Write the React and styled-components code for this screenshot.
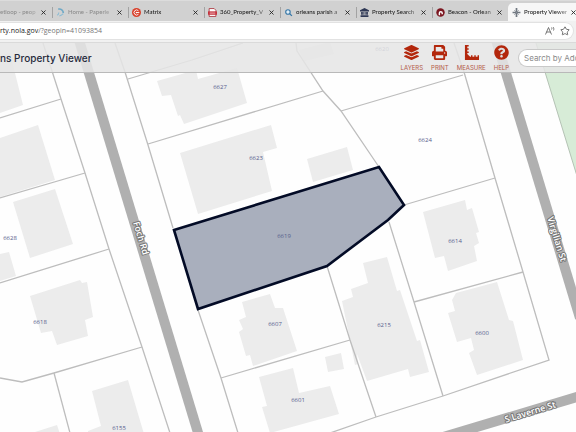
import React from 'react';
import styled, { createGlobalStyle, css } from 'styled-components';
import { FaLayerGroup, FaPrint, FaQuestionCircle } from 'react-icons/fa';
import { X, Star } from 'lucide-react';

const GlobalStyle = createGlobalStyle`
  *, *::before, *::after {
    box-sizing: border-box;
  }

  body {
    margin: 0;
    font-family: 'Open Sans', 'Noto Sans', sans-serif;
    background: #fefefe;
    overflow: hidden;
  }

  button, input {
    font-family: inherit;
    margin: 0;
  }
`;

const Browser = styled.div`
  display: flex;
  flex-direction: column;
  height: 100vh;
  overflow: hidden;
`;

const TabStrip = styled.div`
  display: flex;
  flex: none;
  height: 21px;
  padding-top: 2px;
  background: #d1d1d1;
  border-top: 1px solid #dcdcdc;
  overflow: hidden;
`;

const Tab = styled.div`
  display: flex;
  flex: none;
  align-items: center;
  gap: 3px;
  width: 76px;
  padding: 0 5px 0 4px;
  color: ${({ $faded }) => ($faded ? '#8c8c8c' : '#222')};

  /* divider sits on the left edge of every tab that has an icon */
  &::before {
    content: '';
    width: 1px;
    height: 11px;
    margin-left: -4px;
    background: #a3a3a3;
  }

  ${({ $cut }) =>
    $cut &&
    css`
      width: 52px;
      padding-left: 0;

      &::before {
        display: none;
      }
    `}

  ${({ $active }) =>
    $active &&
    css`
      width: 74px;
      background: #f7f7f7;
      border-radius: 5px 5px 0 0;

      &::before {
        background: transparent;
      }
    `}
`;

const TabLabel = styled.button`
  flex: 1;
  min-width: 0;
  padding: 0;
  border: 0;
  background: none;
  color: inherit;
  font-family: Lato, 'Open Sans', sans-serif;
  font-size: 6px;
  font-weight: 500;
  line-height: 12px;
  text-align: left;
  white-space: nowrap;
  mask-image: linear-gradient(to right, #000 75%, rgba(0, 0, 0, 0.4));
`;

const CloseButton = styled.button`
  display: flex;
  flex: none;
  padding: 0;
  border: 0;
  background: none;
  color: #222;
`;

const TabIcon = styled.svg`
  flex: none;
  width: 9px;
  height: 9px;
`;

const Toolbar = styled.div`
  display: flex;
  flex: none;
  height: 22px;
  padding: 1px 2px 2px 0;
  background: #f1f1f1;
  border-bottom: 1px solid #dadada;
`;

const AddressBar = styled.div`
  display: flex;
  flex: 1;
  align-items: center;
  gap: 5px;
  padding-right: 3px;
  background: #fff;
  border: 1px solid #e2e2e2;
  border-left: 0;
  border-radius: 0 9px 9px 0;
`;

const Url = styled.a`
  flex: 1;
  color: #767676;
  font-size: 7px;
  line-height: 12px;
  text-decoration: none;

  strong {
    color: #222;
    font-weight: 500;
  }
`;

const BarButton = styled.button`
  display: flex;
  align-items: center;
  padding: 0;
  border: 0;
  background: none;
  color: #555;
`;

const Viewer = styled.main`
  position: relative;
  flex: 1;
  min-height: 0;
`;

const Map = styled.svg`
  display: block;
  width: 100%;
  height: 100%;
`;

// translucent bar floating over the map
const Header = styled.header`
  position: absolute;
  top: 0;
  left: 0;
  right: 0;
  display: flex;
  align-items: center;
  height: 30px;
  background: rgba(229, 229, 229, 0.86);
  border-bottom: 1px solid #b9b9b9;
`;

const Title = styled.h1`
  flex: 1;
  margin: 0;
  color: #262b3c;
  font-family: Inter, 'Open Sans', sans-serif;
  font-size: 10px;
  font-weight: 500;
  line-height: 14px;
  white-space: nowrap;
`;

const Tools = styled.nav`
  display: flex;
  gap: 8px;
  margin-right: 9px;
`;

const ToolButton = styled.button`
  display: flex;
  flex-direction: column;
  align-items: center;
  gap: 4px;
  padding: 0;
  border: 0;
  background: none;
  color: #b3270c;
  font-size: 15px;

  span {
    color: #b35a48;
    font-family: Inter, 'Open Sans', sans-serif;
    font-size: 6px;
    line-height: 7px;
  }
`;

const SearchBox = styled.label`
  flex: none;
  width: 58px;
`;

const SearchInput = styled.input`
  display: block;
  width: 100%;
  height: 18px;
  padding: 0 0 0 5px;
  background: #fff;
  border: 1px solid #c9c9c9;
  border-right: 0;
  border-radius: 9px 0 0 9px;
  font-family: Inter, 'Open Sans', sans-serif;
  font-size: 8px;
  outline: none;

  &::placeholder {
    color: #8b8b8b;
    opacity: 1;
  }
`;

const Building = styled.polygon`
  fill: #ececec;
`;

const LotLine = styled.polyline`
  fill: none;
  stroke: #bdbdbd;
  stroke-width: 1.3;
`;

const Street = styled.line`
  stroke: #b0b0b0;
  stroke-width: 10;
`;

const Park = styled.polygon`
  fill: #d7ecd7;
  stroke: #b4c2b4;
`;

const SelectedParcel = styled.polygon`
  fill: #a9afbd;
  stroke: #030b26;
  stroke-width: 2.6;
`;

const LotNumber = styled.text`
  fill: #56608c;
  font-size: 6px;
  text-anchor: middle;
`;

const StreetName = styled.text`
  fill: #fff;
  stroke: #777;
  stroke-width: 2;
  stroke-linejoin: round;
  paint-order: stroke;
  font-size: 9px;
  font-weight: 600;
  text-anchor: middle;
`;

const buildings = [
  '0,56 10,53 16,77 22,75 16,77 23,105 0,113',
  '0,138 38,125 55,180 0,197',
  '13,202 55,189 73,244 30,258',
  '0,254 9,252 16,276 0,281',
  '30,296 80,280 82,283 87,282 93,317 85,320 88,336 57,345 52,331 41,333',
  '92,391 128,380 144,434 88,434 88,431 101,426',
  '35,432 57,425 60,434 35,434',
  '157,81 196,70 198,79 237,68 247,103 184,124 180,115 178,116 171,95 162,96',
  '180,153 271,125 277,148 263,152 272,191 198,214',
  '307,159 347,147 353,170 313,182',
  '299,50 330,42 334,54 304,61',
  '423,212 465,200 467,210 472,208 479,232 476,233 479,243 474,246 477,261 448,271 444,256 435,258',
  '452,300 456,293 497,282 509,320 513,321 523,360 477,375 469,353 474,350 471,338 457,342 448,313 455,311',
  '363,263 387,257 397,291 400,290 417,341 420,340 429,372 410,377 408,369 367,381 357,354 358,364 355,365 342,301 353,297 351,289 368,283',
  '242,302 270,294 275,308 283,308 297,351 253,366 250,355 246,356 239,332 243,329 239,320 246,317',
  '259,377 293,368 299,393 330,386 339,414 270,433 262,407 267,406',
  '325,357 341,353 344,369 328,372',
];

const lotLines = [
  '43,43 61,99 85,173 109,249 142,347 170,433',
  '0,118 61,99',
  '0,198 85,173',
  '0,283 109,249',
  '0,378 22,382 54,373 142,347',
  '54,373 70,433',
  '115,43 125,72 148,145 173,228',
  '128,79 192,60 243,43',
  '148,144 323,91',
  '296,43 297,51 323,91 341,111 379,167',
  '341,111 463,75',
  '454,43 464,72 495,178 523,272 549,360 443,396 376,417 330,433',
  '404,205 495,178',
  '389,222 414,302 443,396',
  '414,302 523,272',
  '327,266 350,340 376,417',
  '350,340 221,378',
  '198,310 221,378 238,433',
];

const lotNumbers = [
  ['6627', 220, 89],
  ['6623', 256, 160],
  ['6624', 425, 142],
  ['6619', 284, 238],
  ['6628', 10, 240],
  ['6618', 40, 324],
  ['6155', 119, 430],
  ['6607', 275, 326],
  ['6601', 298, 402],
  ['6215', 384, 327],
  ['6614', 455, 243],
  ['6600', 482, 335],
  ['6620', 382, 51],
];

const streetNames = [
  ['Foch Rd', 138, 239, 73],
  ['Virgilian St', 554, 240, 73],
  ['S Laverne St', 531, 415, -17],
];

const PaperlessIcon = () => (
  <TabIcon viewBox="0 0 16 16">
    <path d="M4 2c5-1 9 2 9 7" fill="none" stroke="#6fa9c6" strokeWidth="3" />
    <path d="M2 13c2-1 3-3 3-5M6 14c3 0 5-2 7-4" fill="none" stroke="#8dbdd4" strokeWidth="2" />
  </TabIcon>
);

const MatrixIcon = () => (
  <TabIcon viewBox="0 0 16 16">
    <circle cx="8" cy="8" r="8" fill="#d8402b" />
    <path d="M11.500 5a4.500 4.500 0 1 0 0 6M8 8h5" fill="none" stroke="#fff" strokeWidth="1.600" />
    <circle cx="8" cy="8" r="1.500" fill="#fff" />
  </TabIcon>
);

const PdfIcon = () => (
  <TabIcon viewBox="0 0 16 16">
    <path d="M2 1h9l3 3v11H2z" fill="#fff" stroke="#a8313a" strokeWidth="1.500" />
    <path d="M0 6h16v6H0z" fill="#c4303b" />
    <path d="M3 9h10" stroke="#f3c9cc" strokeWidth="1.500" />
  </TabIcon>
);

const SearchIcon = () => (
  <TabIcon viewBox="0 0 16 16">
    <circle cx="7" cy="7" r="4" fill="#e2eef6" stroke="#3878a8" strokeWidth="2" />
    <path d="M10 10l4 4" stroke="#3878a8" strokeWidth="2.500" />
  </TabIcon>
);

const BankIcon = () => (
  <TabIcon viewBox="0 0 16 16">
    <path d="M8 0l8 4v2H0V4zM1 13h14v3H1zM2 7h3v5H2zM6 7h1.500v5H6zM8.500 7H10v5H8.500zM11 7h3v5h-3z" fill="#2f3855" />
  </TabIcon>
);

const BeaconIcon = () => (
  <TabIcon viewBox="0 0 16 16">
    <circle cx="8" cy="8" r="7.500" fill="#7c1721" />
    <path d="M6 13V9c0-3 5-3 5 0v2" fill="none" stroke="#fff" strokeWidth="2.500" />
  </TabIcon>
);

const FleurIcon = () => (
  <TabIcon viewBox="0 0 16 16">
    <path d="M8 0v16M1 8h14" fill="none" stroke="#707780" strokeWidth="3" />
    <path d="M4 4l8 8M12 4l-8 8" fill="none" stroke="#8b9199" strokeWidth="1.500" />
  </TabIcon>
);

// L-shaped ruler with teeth along both arms
const MeasureIcon = () => (
  <svg width="15" height="15" viewBox="0 0 16 16" fill="currentColor">
    <path d="M1 0h4v1.500H3.500v2H5V5H3.500v2H5v1.500H3.500v1L6.500 12.500h1V11H9v1.500h2V11h1.500v1.500h2V11H16v5H1z" />
  </svg>
);

const ReadAloudIcon = () => (
  <svg width="10" height="10" viewBox="0 0 20 20" fill="none" stroke="currentColor" strokeWidth="1.600">
    <path d="M1 17L7 3l6 14M3 12h8M13 3c1 1 1 3 0 4M16 2c2 2 2 5 1 7" />
  </svg>
);

const tabs = [
  { label: 'etloop - peop', faded: true, cut: true },
  { label: 'Home - Paperle', icon: PaperlessIcon, faded: true },
  { label: 'Matrix', icon: MatrixIcon },
  { label: '360_Property_V', icon: PdfIcon },
  { label: 'orleans parish a', icon: SearchIcon },
  { label: 'Property Search', icon: BankIcon },
  { label: 'Beacon - Orlean', icon: BeaconIcon },
  { label: 'Property Viewer', icon: FleurIcon, active: true },
];

const tools = [
  { label: 'LAYERS', icon: FaLayerGroup },
  { label: 'PRINT', icon: FaPrint },
  { label: 'MEASURE', icon: MeasureIcon },
  { label: 'HELP', icon: FaQuestionCircle },
];

const ParcelMap = () => (
  <Map viewBox="0 43 576 389" preserveAspectRatio="xMinYMin slice">
    <Park points="535,40 545,72 577,176 580,176 580,40" />
    {buildings.map((points) => (
      <Building key={points} points={points} />
    ))}
    {lotLines.map((points) => (
      <LotLine key={points} points={points} />
    ))}
    <Street x1="79" y1="40" x2="199" y2="436" />
    <Street x1="496" y1="40" x2="580" y2="318" />
    <Street x1="440" y1="438" x2="580" y2="396" />
    <SelectedParcel points="174,230 379,167 404,205 388,220 327,266 198,309" />
    {lotNumbers.map(([number, x, y]) => (
      <LotNumber key={number} x={x} y={y}>
        {number}
      </LotNumber>
    ))}
    {streetNames.map(([name, x, y, angle]) => (
      <StreetName key={name} transform={`translate(${x} ${y}) rotate(${angle})`}>
        {name}
      </StreetName>
    ))}
  </Map>
);

const App = () => {
  return (
    <Browser>
      <GlobalStyle />

      <TabStrip>
        {tabs.map(({ label, icon: Icon, faded, cut, active }) => (
          <Tab key={label} $faded={faded} $cut={cut} $active={active}>
            {Icon && <Icon />}
            <TabLabel>{label}</TabLabel>
            <CloseButton aria-label="Close tab">
              <X size={7} strokeWidth={3} />
            </CloseButton>
          </Tab>
        ))}
      </TabStrip>

      <Toolbar>
        <AddressBar>
          <Url href="#">
            <strong>rty.nola.gov</strong>/?geopin=41093854
          </Url>
          <BarButton aria-label="Read aloud">
            <ReadAloudIcon />
          </BarButton>
          <BarButton aria-label="Add to favorites">
            <Star size={10} />
          </BarButton>
        </AddressBar>
      </Toolbar>

      <Viewer>
        <ParcelMap />
        <Header>
          <Title>ns Property Viewer</Title>
          <Tools>
            {tools.map(({ label, icon: Icon }) => (
              <ToolButton key={label}>
                <Icon />
                <span>{label}</span>
              </ToolButton>
            ))}
          </Tools>
          <SearchBox>
            <SearchInput type="text" placeholder="Search by Add" aria-label="Search by Address" />
          </SearchBox>
        </Header>
      </Viewer>
    </Browser>
  );
};

export default App;
